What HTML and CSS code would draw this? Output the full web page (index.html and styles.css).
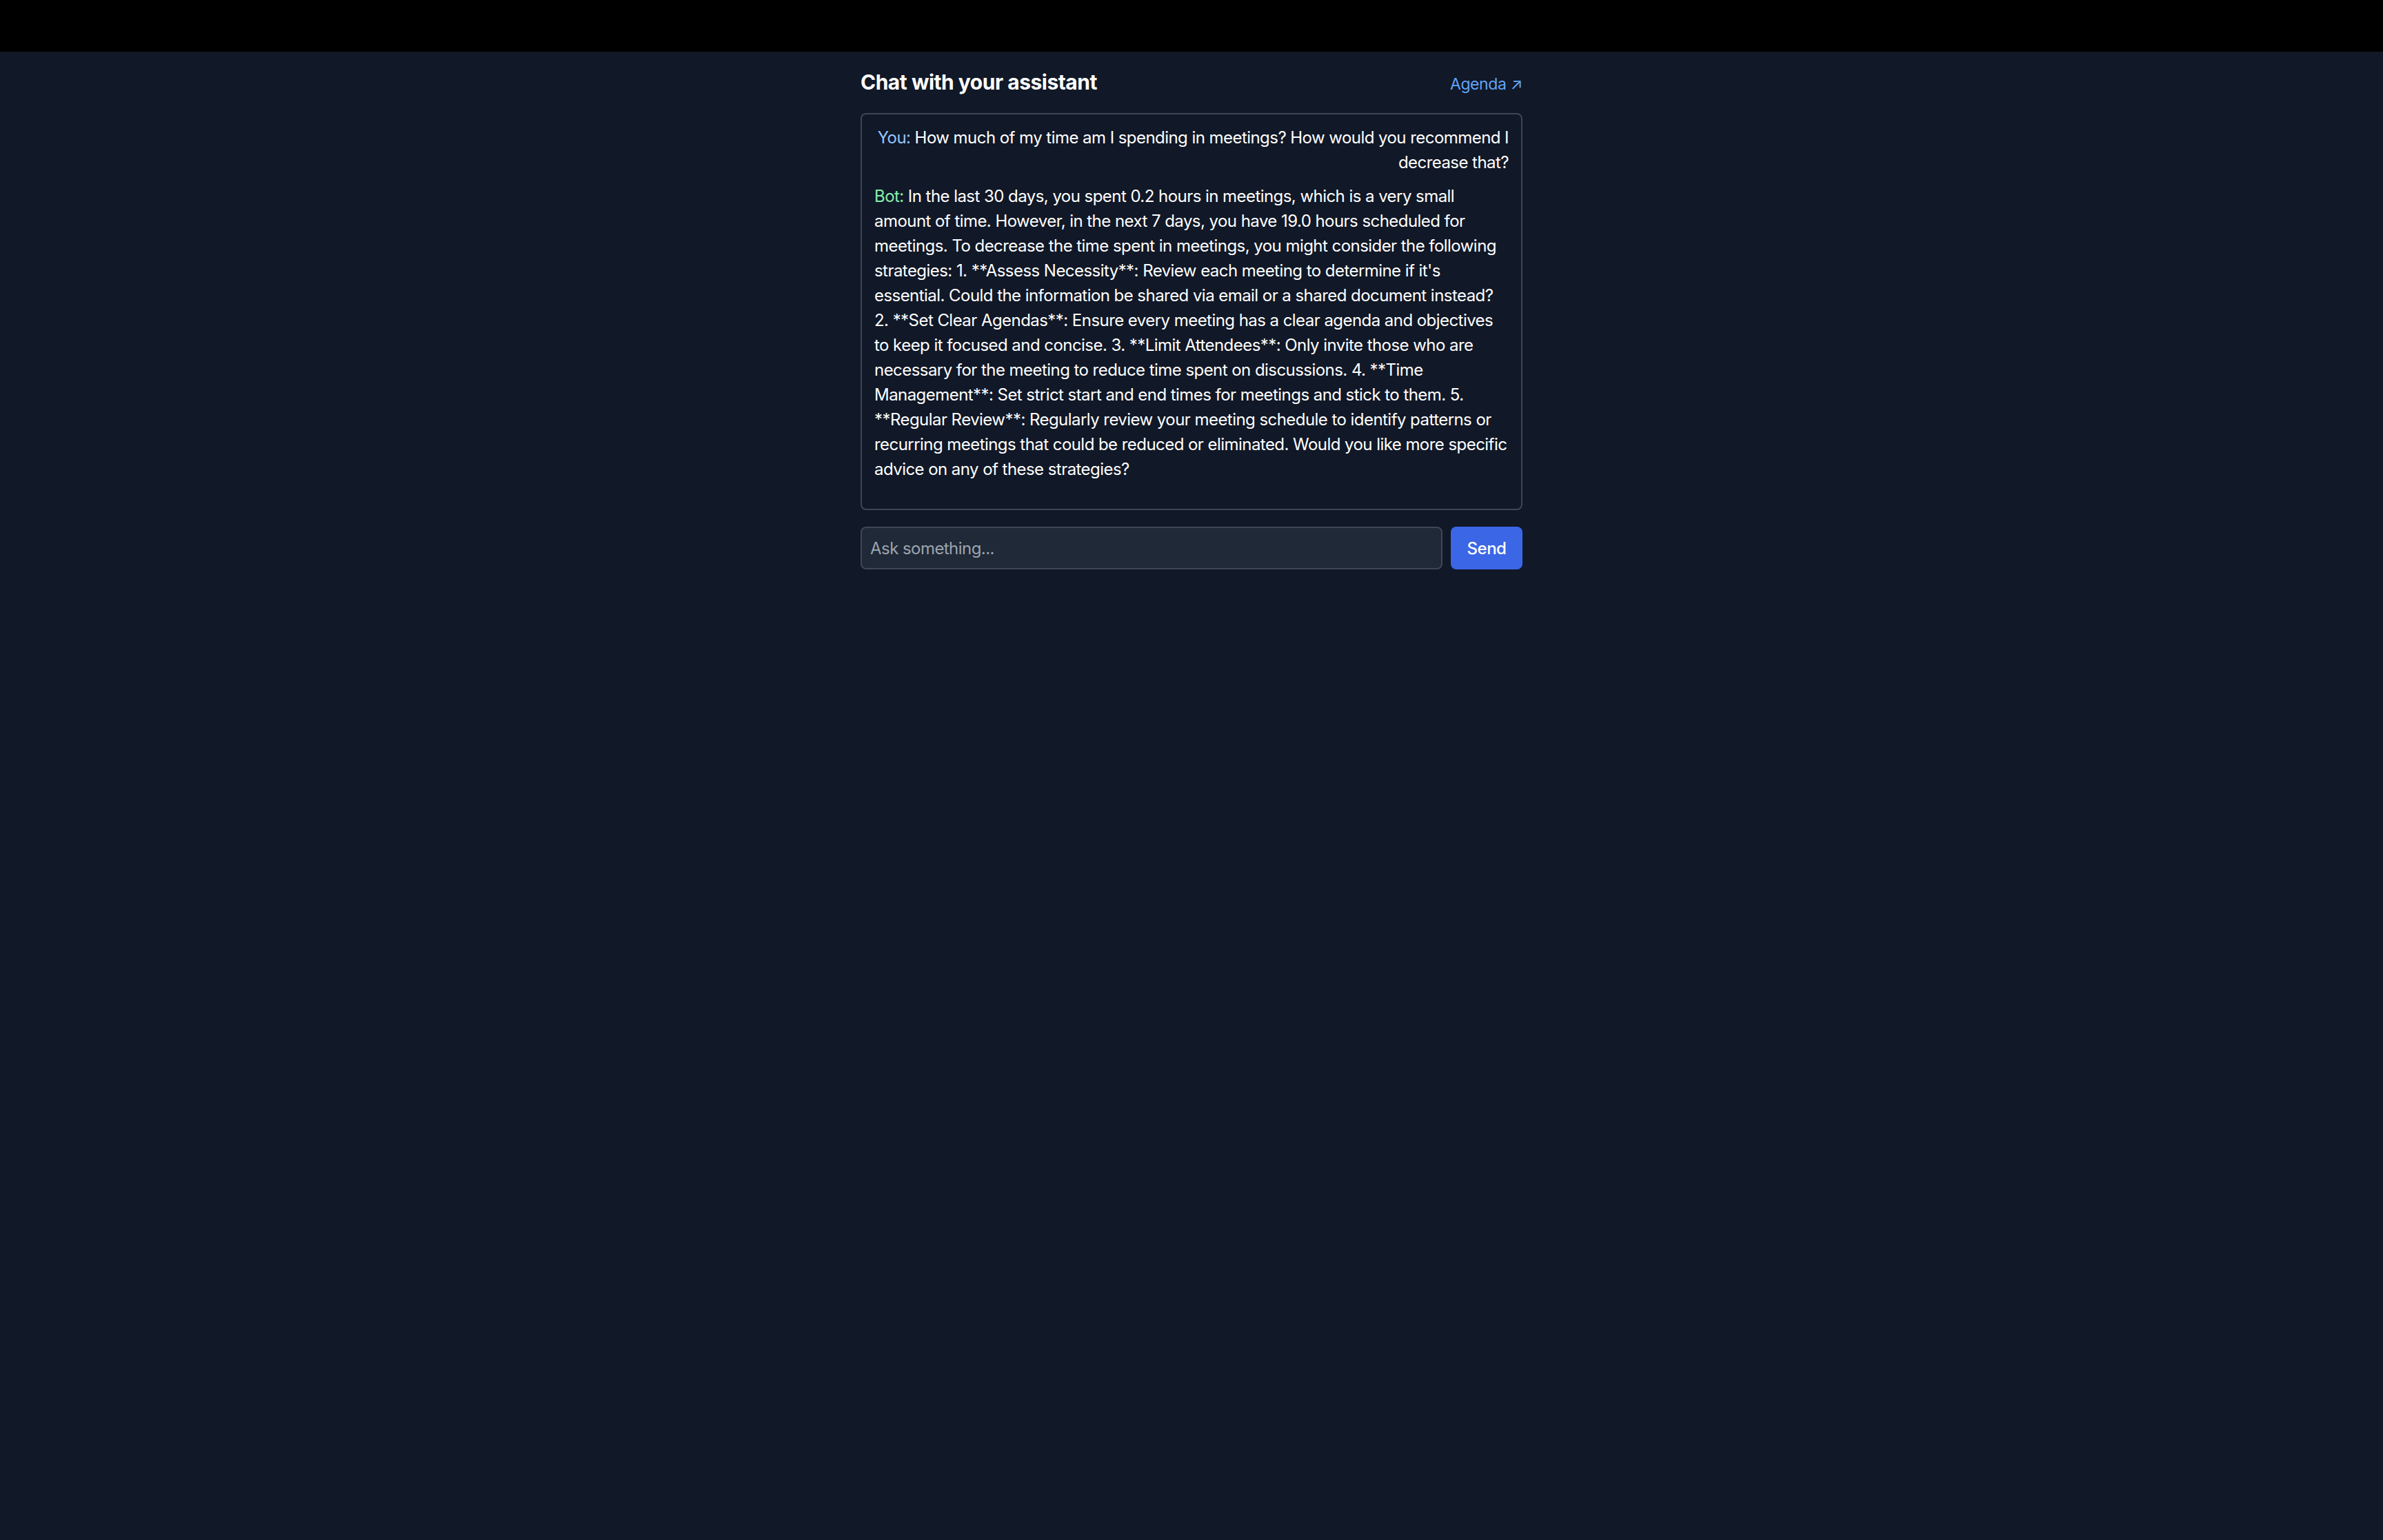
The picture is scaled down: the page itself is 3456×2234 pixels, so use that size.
FILE: index.html
```html
<!DOCTYPE html>
<html lang="en">
<head>
<meta charset="utf-8">
<title>Chat with your assistant</title>
<link rel="stylesheet" href="styles.css">
</head>
<body>
<div class="topbar"></div>
<main class="chat">
  <header class="chat-header">
    <h1 class="chat-title">Chat with your assistant</h1>
    <a class="agenda-link" href="#">Agenda <span class="arrow">↗</span></a>
  </header>
  <section class="messages">
    <p class="msg msg-user"><span class="who who-user">You:</span> How much of my time am I spending in meetings? How would you recommend I decrease that?</p>
    <p class="msg msg-bot"><span class="who who-bot">Bot:</span> In the last 30 days, you spent 0.2 hours in meetings, which is a very small amount of time. However, in the next 7 days, you have 19.0 hours scheduled for meetings. To decrease the time spent in meetings, you might consider the following strategies: 1. **Assess Necessity**: Review each meeting to determine if it's essential. Could the information be shared via email or a shared document instead? 2. **Set Clear Agendas**: Ensure every meeting has a clear agenda and objectives to keep it focused and concise. 3. **Limit Attendees**: Only invite those who are necessary for the meeting to reduce time spent on discussions. 4. **Time Management**: Set strict start and end times for meetings and stick to them. 5. **Regular Review**: Regularly review your meeting schedule to identify patterns or recurring meetings that could be reduced or eliminated. Would you like more specific advice on any of these strategies?</p>
  </section>
  <form class="composer">
    <input class="composer-input" type="text" placeholder="Ask something...">
    <button class="composer-send" type="button">Send</button>
  </form>
</main>
</body>
</html>
```

FILE: styles.css
```css
html, body {
  margin: 0;
  padding: 0;
}
body {
  background: #111827;
  color: #f3f4f6;
  font-family: Inter, "Noto Sans", sans-serif;
  min-height: 2234px;
}
.topbar {
  height: 75px;
  background: #000;
}
.chat {
  width: 960px;
  margin: 0 auto;
  padding-top: 24px;
}
.chat-header {
  display: flex;
  justify-content: space-between;
  align-items: baseline;
  margin-bottom: 25px;
}
.chat-title {
  margin: 0;
  font-size: 30px;
  line-height: 40px;
  font-weight: 700;
  color: #ffffff;
  letter-spacing: -0.5px;
}
.agenda-link {
  color: #60a5fa;
  text-decoration: none;
  font-size: 23px;
  letter-spacing: -0.4px;
}
.messages {
  border: 2px solid #3f4756;
  border-radius: 8px;
  padding: 16px 18px 40px;
  height: 576px;
  box-sizing: border-box;
  background: #111827;
}
.msg {
  margin: 0 0 13px;
  font-size: 24px;
  line-height: 36px;
  letter-spacing: -0.55px;
  color: #ffffff;
}
.msg-user {
  text-align: right;
}
.msg-bot {
  text-align: left;
}
.who-user {
  color: #93c5fd;
}
.who-bot {
  color: #86efac;
}
.composer {
  display: flex;
  gap: 12px;
  margin-top: 24px;
}
.composer-input {
  flex: 1;
  height: 62px;
  box-sizing: border-box;
  background: #1f2937;
  border: 2px solid #3f4756;
  border-radius: 8px;
  padding: 0 12px;
  font-family: Inter, "Noto Sans", sans-serif;
  font-size: 24px;
  letter-spacing: -0.55px;
  color: #f3f4f6;
  outline: none;
}
.composer-input::placeholder {
  color: #9ca3af;
}
.composer-send {
  width: 104px;
  height: 62px;
  border: none;
  border-radius: 8px;
  background: #3b66e5;
  color: #ffffff;
  font-family: Inter, "Noto Sans", sans-serif;
  font-size: 24px;
  letter-spacing: -0.5px;
  font-weight: 500;
}
```
